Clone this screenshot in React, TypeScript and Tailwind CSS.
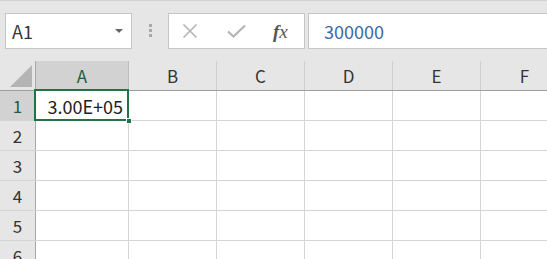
import React from "react";

const cols = ["B", "C", "D", "E", "F"];
const rows = [2, 3, 4, 5, 6];
const font = { fontFamily: '"Noto Sans CJK JP", "Noto Sans", sans-serif' };

export default function App() {
  return (
    <div className="w-[547px] h-[259px] overflow-hidden bg-white" style={font}>
      {/* toolbar */}
      <div className="h-[61px] bg-[#e6e6e6] border-t border-[#d2d2d2] pt-[12px] flex items-start">
        <div className="ml-[5px] w-[127px] shrink-0 h-[36px] bg-white border border-[#c6c6c6] flex items-center pl-[6px] pr-[8px]">
          <span className="text-[18px] text-[#333] leading-none">A1</span>
          <div className="ml-auto w-0 h-0 border-l-[4px] border-r-[4px] border-t-[4px] border-l-transparent border-r-transparent border-t-[#666]" />
        </div>
        <div className="ml-[17px] mt-[11px] flex flex-col gap-[2px] shrink-0">
          <div className="w-[3px] h-[3px] bg-[#a8a8a8]" />
          <div className="w-[3px] h-[3px] bg-[#a8a8a8]" />
          <div className="w-[3px] h-[3px] bg-[#a8a8a8]" />
        </div>
        <div className="ml-[16px] w-[137px] shrink-0 h-[36px] bg-white border border-[#c6c6c6] flex items-center">
          <svg className="ml-[13px]" width="16" height="16" viewBox="0 0 16 16">
            <path d="M1.5 1.5 L14.5 14.5 M14.5 1.5 L1.5 14.5" stroke="#b4b4b4" strokeWidth="1.6" fill="none" />
          </svg>
          <svg className="ml-[29px]" width="19" height="14" viewBox="0 0 19 14">
            <path d="M1 7.5 L6.5 12.5 L18 1.5" stroke="#b4b4b4" strokeWidth="2.2" fill="none" />
          </svg>
          <span
            className="ml-[27px] text-[19px] italic text-[#555] leading-none"
            style={{ fontFamily: '"Liberation Serif", "DejaVu Serif", serif' }}
          >
            <span className="font-bold">f</span>x
          </span>
        </div>
        <div className="ml-[3px] flex-1 h-[36px] bg-white border border-r-0 border-[#c6c6c6] flex items-center pl-[15px]">
          <span className="text-[18px] text-[#3a6aa6] leading-none">300000</span>
        </div>
      </div>

      {/* header row */}
      <div className="flex h-[30px] bg-[#e6e6e6] border-b border-[#9e9e9e]">
        <div className="w-[36px] shrink-0 border-r border-[#a8a8a8] flex items-end justify-end pr-[3px] pb-[3px]">
          <svg width="22" height="22" viewBox="0 0 22 22">
            <polygon points="22,0 22,22 0,22" fill="#b4b4b4" />
          </svg>
        </div>
        <div className="w-[93px] shrink-0 bg-[#d2d2d2] border-r border-[#bdbdbd] flex items-center justify-center text-[17px] text-[#215d3b]">
          A
        </div>
        {cols.map((c) => (
          <div
            key={c}
            className="w-[88px] shrink-0 border-r border-[#d0d0d0] flex items-center justify-center text-[17px] text-[#333]"
          >
            {c}
          </div>
        ))}
      </div>

      {/* row 1 */}
      <div className="flex h-[30px] border-b border-[#d4d4d4]">
        <div className="w-[36px] shrink-0 bg-[#d2d2d2] border-r border-[#a8a8a8] flex items-center justify-center text-[17px] text-[#215d3b]">
          1
        </div>
        <div className="relative w-[93px] shrink-0 border-r border-[#d4d4d4] flex items-center justify-end pr-[5px]">
          <span className="text-[18px] text-[#222] leading-none">3.00E+05</span>
          <div className="absolute left-[-2px] top-[-2px] w-[95px] h-[32px] border-2 border-[#217346]" />
          <div className="absolute right-[-4px] bottom-[-4px] w-[6px] h-[6px] bg-[#217346] border border-white" />
        </div>
        {cols.map((c) => (
          <div key={c} className="w-[88px] shrink-0 border-r border-[#d4d4d4]" />
        ))}
      </div>

      {rows.map((r) => (
        <div key={r} className="flex h-[30px] border-b border-[#d4d4d4]">
          <div className="w-[36px] shrink-0 bg-[#e6e6e6] border-r border-[#a8a8a8] flex items-center justify-center text-[17px] text-[#333]">
            {r}
          </div>
          <div className="w-[93px] shrink-0 border-r border-[#d4d4d4]" />
          {cols.map((c) => (
            <div key={c} className="w-[88px] shrink-0 border-r border-[#d4d4d4]" />
          ))}
        </div>
      ))}
    </div>
  );
}
